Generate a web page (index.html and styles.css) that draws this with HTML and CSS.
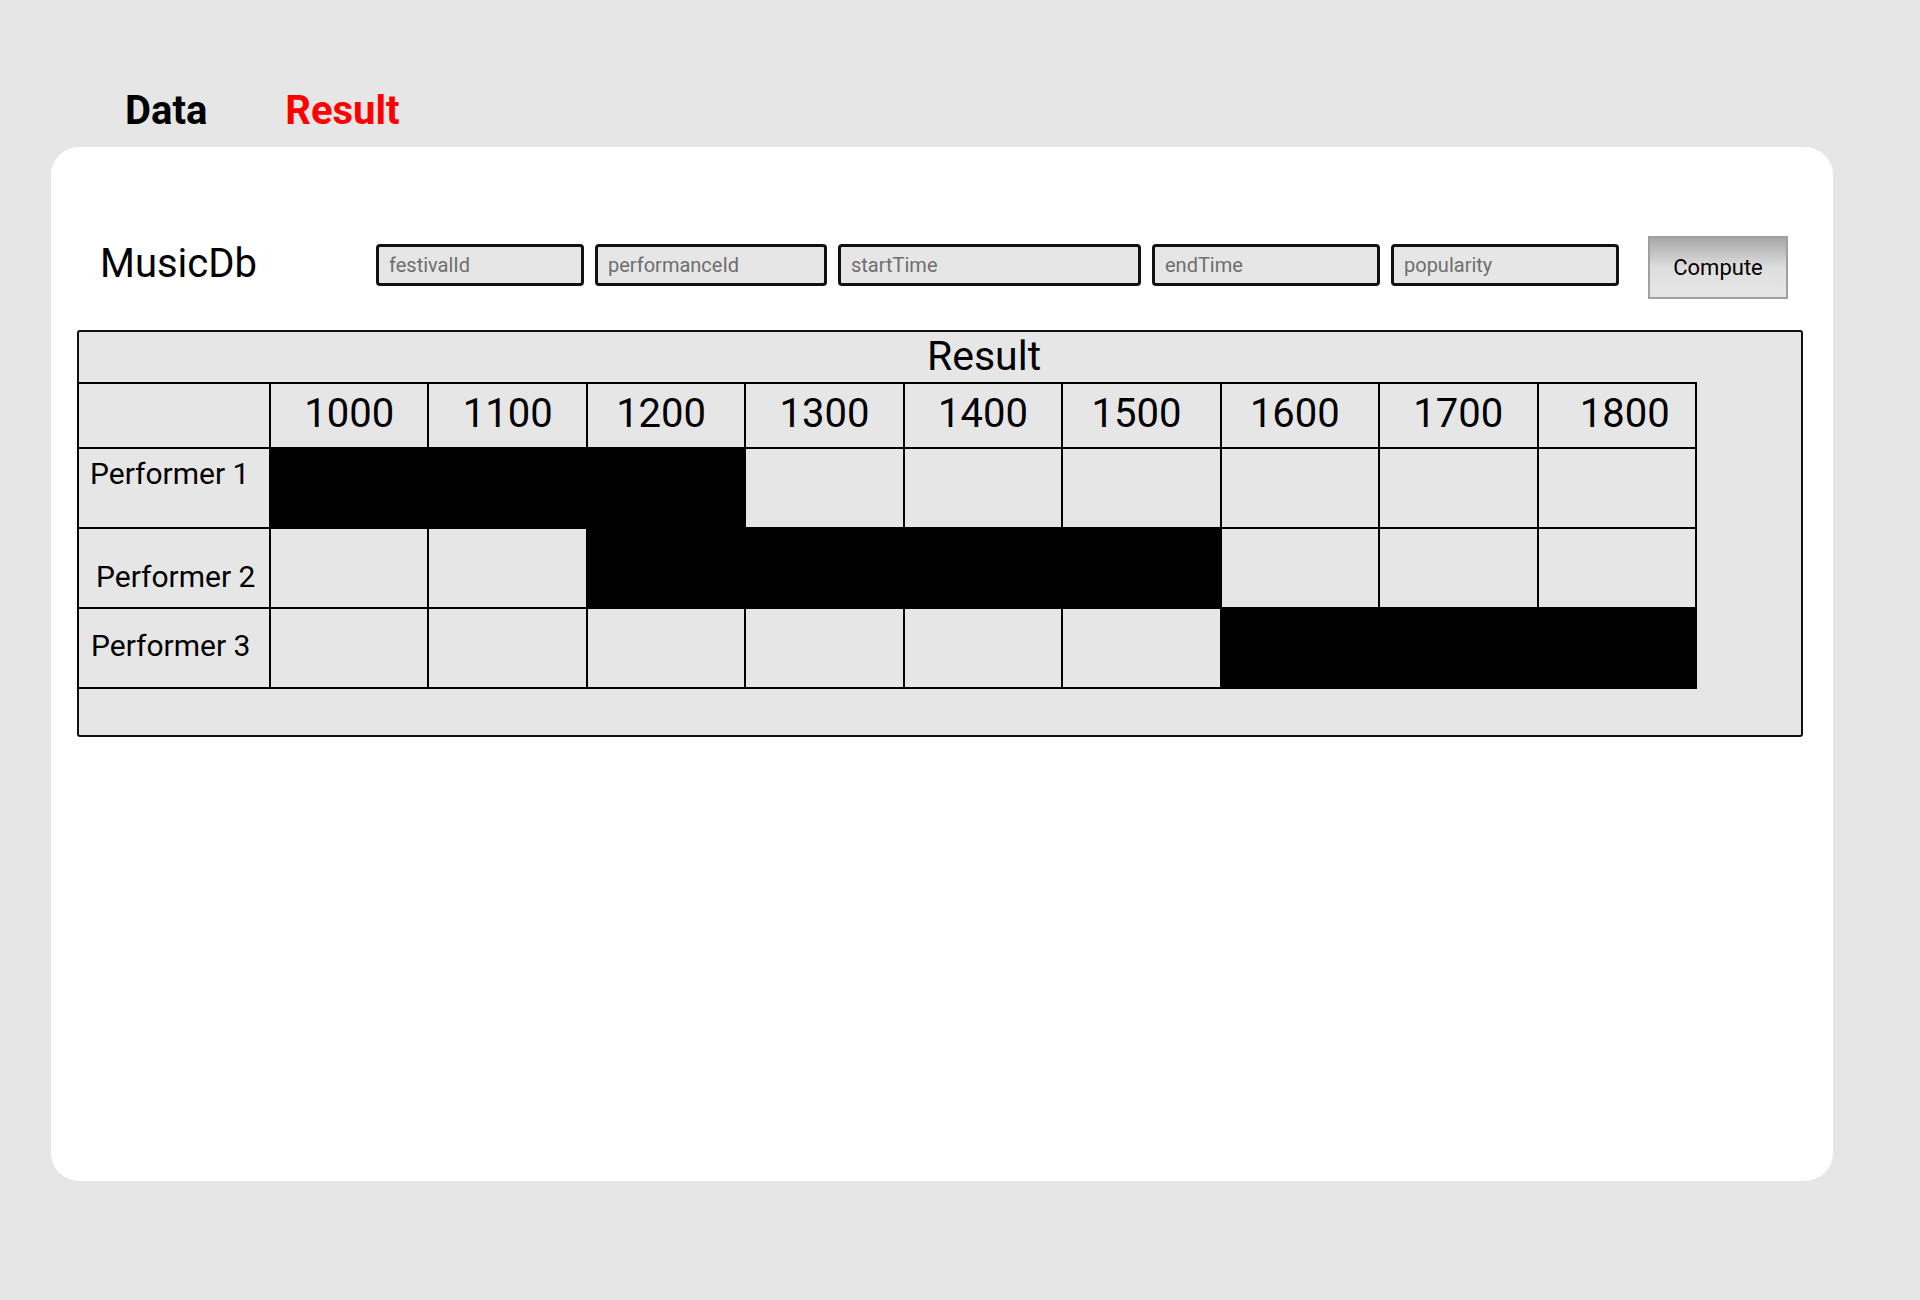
FILE: index.html
```html
<!DOCTYPE html>
<html lang="en">
<head>
  <meta charset="UTF-8" />
  <title>MusicDb - Result</title>
  <meta name="viewport" content="width=device-width, initial-scale=1" />
  <link rel="stylesheet" href="styles.css">
</head>
<body>
  <!-- Tabs -->
  <nav class="tabs">
    <a class="tab">Data</a>
    <a class="tab active">Result</a>
  </nav>

  <div class="card">
    <!-- Query bar -->
    <div class="toolbar">
      <h1 class="app-title">MusicDb</h1>
      <input class="field w-festival" type="text" placeholder="festivalId" />
      <input class="field w-performance" type="text" placeholder="performanceId" />
      <input class="field w-start" type="text" placeholder="startTime" />
      <input class="field w-end" type="text" placeholder="endTime" />
      <input class="field w-popularity" type="text" placeholder="popularity" />
      <button class="compute-btn" type="button">Compute</button>
    </div>

    <!-- Schedule result -->
    <section class="result-box">
      <div class="result-title">Result</div>
      <table class="schedule">
        <thead>
          <tr>
            <th class="corner"></th>
            <th>1000</th>
            <th>1100</th>
            <th class="nudge-l">1200</th>
            <th>1300</th>
            <th>1400</th>
            <th class="nudge-l">1500</th>
            <th class="nudge-l">1600</th>
            <th>1700</th>
            <th class="nudge-r">1800</th>
          </tr>
        </thead>
        <tbody>
          <tr>
            <td class="performer p-top">Performer 1</td>
            <td class="busy"></td>
            <td class="busy"></td>
            <td class="busy"></td>
            <td></td>
            <td></td>
            <td></td>
            <td></td>
            <td></td>
            <td></td>
          </tr>
          <tr>
            <td class="performer p-bottom">Performer 2</td>
            <td></td>
            <td></td>
            <td class="busy"></td>
            <td class="busy"></td>
            <td class="busy"></td>
            <td class="busy"></td>
            <td></td>
            <td></td>
            <td></td>
          </tr>
          <tr>
            <td class="performer p-middle">Performer 3</td>
            <td></td>
            <td></td>
            <td></td>
            <td></td>
            <td></td>
            <td></td>
            <td class="busy"></td>
            <td class="busy"></td>
            <td class="busy"></td>
          </tr>
        </tbody>
      </table>
    </section>
  </div>
</body>
</html>
```

FILE: styles.css
```css
* {
  box-sizing: border-box;
}
body {
  margin: 0;
  font-family: Roboto, 'Liberation Sans', sans-serif;
  background: #e6e6e6;
  color: #000;
  min-height: 100vh;
}

/* tabs */
.tabs {
  display: flex;
  gap: 78px;
  padding: 89px 0 14px 125px;
}
.tab {
  font-size: 40px;
  font-weight: 700;
  line-height: 44px;
  color: #000;
  cursor: pointer;
}
.tab.active {
  color: #ff0000;
}

/* main card */
.card {
  margin-left: 51px;
  width: 1782px;
  height: 1034px;
  background: #fff;
  border-radius: 28px;
  padding: 89px 30px 0 26px;
}

.toolbar {
  display: flex;
  align-items: flex-start;
  gap: 11px;
  height: 63px;
}
.app-title {
  margin: 5px 0 0;
  width: 288px;
  padding-left: 23px;
  font-size: 40px;
  font-weight: 400;
  line-height: 46px;
}
.field {
  margin-top: 8px;
  height: 42px;
  border: 3px solid #111;
  border-radius: 4px;
  background: #e6e6e6;
  padding: 0 10px;
  font-family: inherit;
  font-size: 20px;
  color: #333;
}
.field::placeholder {
  color: #6e6e6e;
}
.field:focus {
  outline: none;
}
.w-festival { width: 208px; }
.w-performance { width: 232px; }
.w-start { width: 303px; }
.w-end { width: 228px; }
.w-popularity { width: 228px; }

.compute-btn {
  margin-left: 18px;
  width: 140px;
  height: 63px;
  border: 2px solid #a0a0a0;
  background: linear-gradient(#a8a8a8, #dedede 50%, #e6e6e6);
  font-family: inherit;
  font-size: 22px;
  color: #000;
  cursor: pointer;
}

/* result box */
.result-box {
  margin-top: 31px;
  height: 407px;
  border: 2px solid #111;
  border-radius: 3px;
  background: #e6e6e6;
}
.result-title {
  height: 50px;
  line-height: 48px;
  font-size: 41px;
  text-align: center;
  padding-left: 88px;
}

.schedule {
  margin-left: -2px;
  width: 1620px;
  border-collapse: collapse;
  table-layout: fixed;
}
.schedule th,
.schedule td {
  border: 2px solid #000;
  padding: 0;
}
.schedule th {
  height: 65px;
  padding-bottom: 5px;
  font-size: 40px;
  font-weight: 400;
  text-align: center;
}
.schedule th.corner {
  width: 192px;
}
.schedule th.nudge-l {
  padding-right: 10px;
}
.schedule th.nudge-r {
  padding-left: 16px;
}
.schedule td {
  height: 80px;
}
.schedule td.busy {
  background: #000;
}
.performer {
  font-size: 30px;
  white-space: nowrap;
}
.performer.p-top {
  vertical-align: top;
  padding: 7px 0 0 11px;
}
.performer.p-bottom {
  vertical-align: bottom;
  padding: 0 0 13px 17px;
}
.performer.p-middle {
  vertical-align: middle;
  padding: 0 0 5px 12px;
}
```
